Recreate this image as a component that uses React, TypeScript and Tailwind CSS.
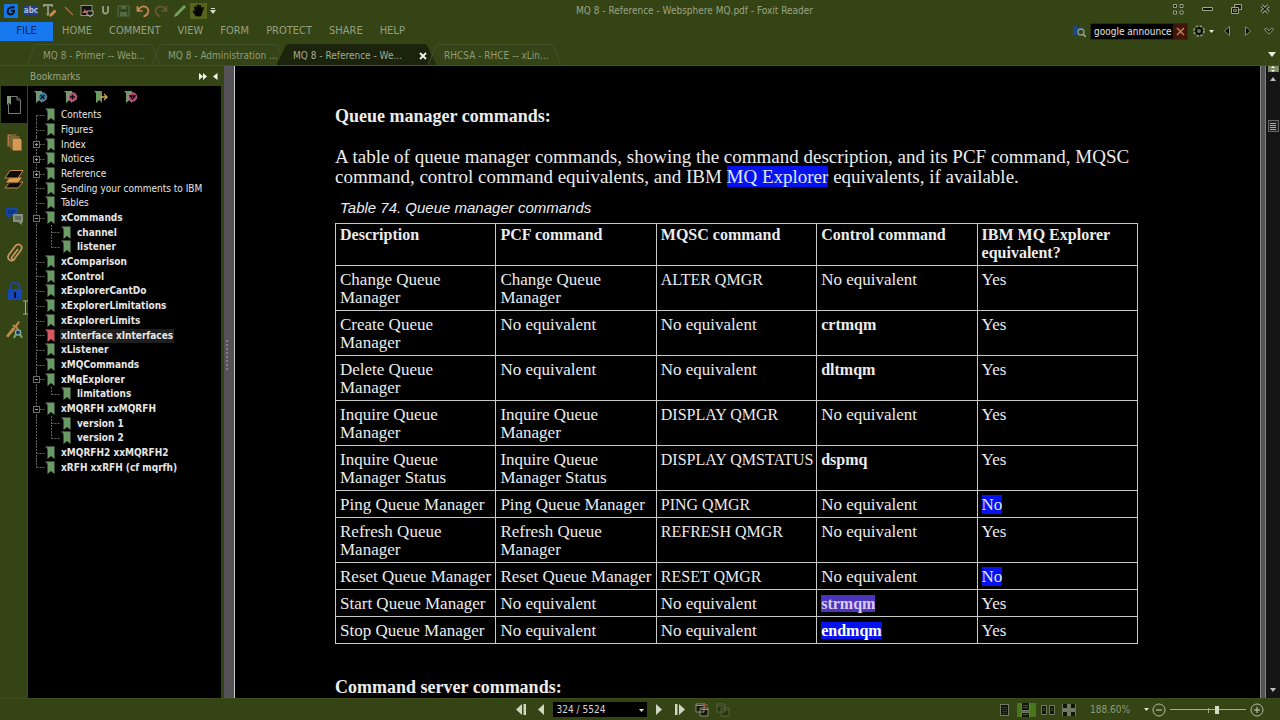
import React from "react";

type Kids = { children?: React.ReactNode };

const uiFont = "font-['DejaVu_Sans_Condensed','DejaVu_Sans',sans-serif]";

function IconButton({ label, className = "", children }: Kids & { label: string; className?: string }) {
  return (
    <button type="button" aria-label={label} title={label} className={`flex shrink-0 items-center justify-center ${className}`}>
      {children}
    </button>
  );
}

/* ---------- title bar ---------- */

function TitleBar() {
  return (
    <header className="flex h-[21px] shrink-0 items-center">
      <div className="flex w-[217px] shrink-0 items-center pl-1">
        <IconButton label="Foxit Reader" className="w-[14px]">
          <svg width="14" height="14" viewBox="0 0 14 14">
            <rect width="14" height="14" rx="1" fill="#1477e8" />
            <path d="M10.500 3.500C6.500 2.600 3.600 4.500 3.600 7.400c0 2.300 1.800 3.400 3.600 3 2-.5 2.800-2 2.800-3.600H7" fill="none" stroke="#0a1420" strokeWidth="2" />
          </svg>
        </IconButton>
        <IconButton label="Highlight text" className="ml-[5px] w-4">
          <span className="bg-[#23408c] text-[8px] leading-[9px] font-bold text-[#aebdcc]">abc</span>
        </IconButton>
        <IconButton label="Typewriter" className="ml-1 w-[14px]">
          <svg width="14" height="15" viewBox="0 0 14 15">
            <path d="M1 4V2h8v2M5 2v9M3.500 11.500h3" fill="none" stroke="#8f997e" strokeWidth="1.800" />
            <path d="m6.500 14 .5-3 4.500-4.500 2 2L9 13z" fill="#c98a50" />
          </svg>
        </IconButton>
        <IconButton label="Line" className="ml-[5px] w-[14px]">
          <svg width="12" height="12" viewBox="0 0 12 12">
            <path d="m2 2 8 8" stroke="#a57045" strokeWidth="1.300" />
          </svg>
        </IconButton>
        <IconButton label="Snapshot" className="ml-1 w-[14px]">
          <svg width="14" height="14" viewBox="0 0 14 14">
            <rect x="1" y="1.500" width="11" height="10" fill="#121410" stroke="#94917e" />
            <path d="m2 9 3-4 3 4H2z" fill="#b0605a" />
            <path d="M7 7h6v4h-2l-1 2-1-2H7z" fill="#14170f" stroke="#b8aaa5" />
          </svg>
        </IconButton>
        <IconButton label="Underline" className="ml-1 w-[14px]">
          <svg width="9" height="11" viewBox="0 0 9 11">
            <path d="M2 1v5c0 3.500 5 3.500 5 0V1" fill="none" stroke="#98a387" strokeWidth="1.700" />
          </svg>
        </IconButton>
        <IconButton label="Save" className="ml-[5px] w-[13px]">
          <svg width="13" height="12" viewBox="0 0 13 12">
            <path d="M1 1h11v10H1z" fill="none" stroke="#49603b" strokeWidth="1.500" />
            <path d="M4 1h5v3H4zM3 7h7v4H3z" fill="#526b45" />
          </svg>
        </IconButton>
        <IconButton label="Undo" className="ml-[6px] w-[14px]">
          <svg width="14" height="14" viewBox="0 0 14 14">
            <path d="M1.500 2v5h5M2 6.500C4 2.500 7.500 1.500 10 3c4 2.500 2.500 8.500-2.500 9.500" fill="none" stroke="#cd8653" strokeWidth="1.700" />
          </svg>
        </IconButton>
        <IconButton label="Redo" className="ml-1 w-[14px]">
          <svg width="14" height="14" viewBox="0 0 14 14">
            <path d="M12.500 2v5h-5M12 6.500C10 2.500 6.500 1.500 4 3 0 5.500 1.500 11.500 6.500 12.500" fill="none" stroke="#69592e" strokeWidth="1.700" />
          </svg>
        </IconButton>
        <IconButton label="Pencil" className="ml-[5px] w-[14px]">
          <svg width="14" height="14" viewBox="0 0 14 14">
            <path d="m1 13 1-3L11 1l2 2-9 9z" fill="#74a35d" />
          </svg>
        </IconButton>
        <IconButton label="Hand" className="ml-[3px] h-4 w-[17px] bg-[#56651b]">
          <svg width="13" height="13" viewBox="0 0 13 13">
            <path d="M4 12 1 7.500l1-.8 1.500 1.200L2.500 3l1.200-.4 1.500 3V1h1.400v4.500L7.700 1.300l1.200.4-.4 4L10.600 3l1 .7-1.700 5L8.800 12z" fill="#050605" stroke="#050605" strokeWidth=".8" />
          </svg>
        </IconButton>
        <IconButton label="Customize toolbar" className="ml-[2px] w-2">
          <svg width="6" height="6" viewBox="0 0 6 6">
            <path d="M1 0h4v1H1zM0 2h6L3 6z" fill="#d6dcc6" />
          </svg>
        </IconButton>
      </div>
      <h1 className="flex-1 text-center text-[10px] text-[#99a386]">MQ 8 - Reference - Websphere MQ.pdf - Foxit Reader</h1>
      <div className="flex items-center gap-[17px] pr-[9px] pb-1">
        <IconButton label="Touch mode" className="w-3">
          <svg width="12" height="12" viewBox="0 0 12 12">
            <path d="M1.500 1.500h3v3h-3zM8 1.500h3v3H8zM1.500 8h3v3h-3zM8 8h3v3H8z" fill="#14190a" stroke="#9ba588" />
          </svg>
        </IconButton>
        <IconButton label="Minimize" className="w-3">
          <svg width="11" height="4" viewBox="0 0 11 4"><path d="M.5.5h10v3H.5z" fill="#12170a" stroke="#9ba588" /></svg>
        </IconButton>
        <IconButton label="Restore" className="w-3">
          <svg width="11" height="10" viewBox="0 0 11 10">
            <path d="M3.500.5h7v5h-3M3.500 3V.5M.5 3.500h7v6h-7z" fill="#14190a" stroke="#9ba588" />
            <path d="M2.500 5.500h3v2h-3z" fill="#354415" stroke="#9ba588" strokeWidth=".7" />
          </svg>
        </IconButton>
        <IconButton label="Close" className="w-3">
          <svg width="10" height="10" viewBox="0 0 10 10">
            <path d="m1.500 1.500 7 7m0-7-7 7" stroke="#a3ad91" strokeWidth="3.200" />
            <path d="m1.500 1.500 7 7m0-7-7 7" stroke="#12170a" strokeWidth="1.400" />
          </svg>
        </IconButton>
      </div>
    </header>
  );
}

/* ---------- menu row ---------- */

const menus = ["HOME", "COMMENT", "VIEW", "FORM", "PROTECT", "SHARE", "HELP"];

function MenuRow() {
  return (
    <div className="flex h-5 shrink-0 items-center justify-between">
      <nav className="flex h-full items-center gap-[17px] text-[11px] text-[#95a083]">
        <a href="#file" className="mr-[-8px] flex h-[19px] w-[53px] items-center justify-center bg-[#1778f0] text-[#0c2850]">FILE</a>
        {menus.map((m) => (
          <a key={m} href={`#${m.toLowerCase()}`}>{m}</a>
        ))}
      </nav>
      <div className="flex h-full items-center pr-[6px]">
        <IconButton label="Find in files" className="w-[14px]">
          <svg width="14" height="14" viewBox="0 0 14 14">
            <path d="M1 2h4l1 2h5v7H1z" fill="#1d4a86" />
            <circle cx="9" cy="8" r="3" fill="#33431a" stroke="#8f9f83" strokeWidth="1.300" />
            <path d="m11 10 3 3" stroke="#9faf90" strokeWidth="1.500" />
          </svg>
        </IconButton>
        <div className="ml-1 flex h-[17px] w-[98px] border border-[#27310f] bg-black">
          <input aria-label="Find" defaultValue="google announced" className="ml-[3px] w-[78px] min-w-0 bg-transparent text-[10px] text-[#e4e4e4] outline-none" />
          <IconButton label="Clear search" className="ml-px w-[14px] bg-[#40150a]">
            <svg width="9" height="9" viewBox="0 0 9 9"><path d="m1 1 7 7m0-7L1 8" stroke="#d0835e" strokeWidth="1.400" /></svg>
          </IconButton>
        </div>
        <IconButton label="Search settings" className="ml-[5px] w-3">
          <svg width="12" height="12" viewBox="0 0 12 12">
            <circle cx="6" cy="6" r="4.800" fill="none" stroke="#8d9878" strokeWidth="2.200" strokeDasharray="2.200 1.600" />
            <circle cx="6" cy="6" r="3" fill="#6c7950" stroke="#0a0d05" strokeWidth="2" />
          </svg>
        </IconButton>
        <IconButton label="Search options" className="ml-[3px] w-[6px]">
          <svg width="5" height="3" viewBox="0 0 5 3"><path d="M0 0h5L2.500 3z" fill="#e6eadb" /></svg>
        </IconButton>
        <IconButton label="Find previous" className="ml-2 w-[9px]">
          <svg width="8" height="12" viewBox="0 0 8 12"><path d="M6.500 1.500v9L1.500 6z" fill="#080a04" stroke="#84906b" /></svg>
        </IconButton>
        <IconButton label="Find next" className="ml-3 w-[9px]">
          <svg width="8" height="12" viewBox="0 0 8 12"><path d="M1.500 1.500v9l5-4.500z" fill="#080a04" stroke="#84906b" /></svg>
        </IconButton>
        <IconButton label="Collapse ribbon" className="ml-3 w-[10px]">
          <svg width="10" height="8" viewBox="0 0 10 8">
            <path d="M1 1.500 5 5.500l4-4" fill="none" stroke="#98a383" strokeWidth="3" />
            <path d="M1.500 2 5 5.500 8.500 2" fill="none" stroke="#141a09" strokeWidth="1.300" />
          </svg>
        </IconButton>
      </div>
    </div>
  );
}

/* ---------- document tabs ---------- */

const tabs = [
  { title: "MQ 8 - Primer -- Web...", active: false },
  { title: "MQ 8 - Administration ...", active: false },
  { title: "MQ 8 - Reference - We...", active: true },
  { title: "RHCSA - RHCE -- xLin...", active: false },
];

function TabRow() {
  return (
    <div className="flex h-[25px] shrink-0 items-end justify-between border-b border-[#43521f] pl-[27px]">
      <div role="tablist" className="flex h-[21px]">
        {tabs.map((t) => (
          <button
            key={t.title}
            type="button"
            role="tab"
            aria-selected={t.active}
            className={`relative mr-[-8px] flex items-center pl-4 text-[10px] whitespace-nowrap ${t.active ? "w-[159px] text-[#a3ab93]" : "w-[133px] text-[#8f9b79]"}`}
          >
            <svg className="absolute inset-0 h-full w-full" viewBox="0 0 133 21" preserveAspectRatio="none">
              <path d="M0 21 8 1.500Q9 .5 10 .5h113q1 0 2 1L133 21" fill={t.active ? "#1b230c" : "#34441a"} fillOpacity={t.active ? 1 : 0.3} stroke={t.active ? "#1b230c" : "#42522a"} />
            </svg>
            <span className="relative pt-[2px]">{t.title}</span>
            {t.active && (
              <svg className="relative mt-[2px] mr-[9px] ml-auto" width="8" height="8" viewBox="0 0 8 8" aria-label="Close tab">
                <path d="m1 1 6 6m0-6L1 7" stroke="#f2f4ec" strokeWidth="1.800" />
              </svg>
            )}
          </button>
        ))}
      </div>
      <IconButton label="Tab list" className="mr-1 mb-2 w-2">
        <svg width="8" height="5" viewBox="0 0 8 5"><path d="M0 0h8L4 5z" fill="#e6eadb" /></svg>
      </IconButton>
    </div>
  );
}

/* ---------- navigation panel ---------- */

function SideStrip() {
  return (
    <div className="flex w-7 shrink-0 flex-col border-r border-[#3d4a2a]">
      <IconButton label="Bookmarks" className="ml-px h-[37px] bg-black">
        <svg width="16" height="20" viewBox="0 0 16 20">
          <path d="M5 1.500h6L14.500 5v13.500h-12V9" fill="none" stroke="#777a77" />
          <path d="M11 1.500V5h3.500" fill="none" stroke="#777a77" />
          <path d="M1 1h4v9L3 8l-2 2z" fill="#81987d" />
        </svg>
      </IconButton>
      <IconButton label="Page thumbnails" className="h-[38px] pl-[2px]">
        <svg width="17" height="19" viewBox="0 0 17 19">
          <path d="M1 1h10v13H1z" fill="#b47a46" stroke="#354415" />
          <path d="M4 3h10v13H4z" fill="#c5864d" stroke="#354415" />
          <path d="M6 5h8l2 2v11H6z" fill="#d99855" stroke="#354415" />
        </svg>
      </IconButton>
      <IconButton label="Layers" className="h-9">
        <svg width="20" height="20" viewBox="0 0 20 20">
          <path d="M6 13h13l-5 6H1z" fill="#0b0d06" stroke="#c58c52" />
          <path d="M6 8h13l-5 6H1z" fill="#e39c50" stroke="#382c18" />
          <path d="M6 1.500h13L14 9H1z" fill="#0b0d06" stroke="#c58c52" />
        </svg>
      </IconButton>
      <IconButton label="Comments" className="h-[37px] pl-[2px]">
        <svg width="19" height="18" viewBox="0 0 19 18">
          <path d="M1 1h12v8H6l-3 3V9H1z" fill="#1845a4" />
          <path d="M3 4h8M3 6h6" stroke="#0b2866" />
          <path d="M8 7h10v8h-1v3l-4-3H8z" fill="#859083" />
          <path d="M10 10h6M10 12h6" stroke="#3e4937" />
        </svg>
      </IconButton>
      <IconButton label="Attachments" className="h-[38px] pl-[2px]">
        <svg width="16" height="20" viewBox="0 0 16 20">
          <path d="m11 6-6 8c-1.500 2 1 3.500 2.500 1.700l6-8C17 3 11.500-1 8 3.400l-6 8C-1 16 4 20 8 16" fill="none" stroke="#c69760" strokeWidth="1.700" />
        </svg>
      </IconButton>
      <IconButton label="Security" className="h-[38px] pl-[2px]">
        <svg width="16" height="20" viewBox="0 0 16 20">
          <path d="M3.500 9V6a4.500 4.500 0 0 1 9 0v3" fill="none" stroke="#1848a8" strokeWidth="2" />
          <path d="M1 8h14v11H1z" fill="#1547b8" />
          <path d="M7 11h2v6H7z" fill="#06102a" />
        </svg>
      </IconButton>
      <IconButton label="Digital signatures" className="h-[38px] pl-[2px]">
        <svg width="17" height="19" viewBox="0 0 17 19">
          <path d="m0 16 7-9 2.500 2L2 17.500z" fill="#c4894f" />
          <path d="m8 7 4.500-6 1.500 1-4 6z" fill="#c4894f" />
          <path d="m7 5 5 4" stroke="#c4894f" strokeWidth="2" />
          <path d="m10 14-2 4M14 14l2 4" stroke="#6fa46a" strokeWidth="2" />
          <circle cx="12" cy="12.500" r="2.600" fill="#173c72" stroke="#8ab4a2" strokeWidth="1.300" />
        </svg>
      </IconButton>
    </div>
  );
}

function Ribbon({ red }: { red?: boolean }) {
  return (
    <svg className="relative shrink-0" width="10" height="14" viewBox="0 0 10 14">
      <path d="M2 .5h7.500V13L6 10l-3.500 3V3z" fill={red ? "#d7585f" : "#6b9a67"} />
      <path d="M0 .5h3V4z" fill={red ? "#b84e50" : "#577c54"} />
    </svg>
  );
}

type Node = { label: string; bold?: boolean; box?: "+" | "-"; child?: "mid" | "last"; red?: boolean };

const nodes: Node[] = [
  { label: "Contents" },
  { label: "Figures" },
  { label: "Index", box: "+" },
  { label: "Notices", box: "+" },
  { label: "Reference", box: "+" },
  { label: "Sending your comments to IBM" },
  { label: "Tables" },
  { label: "xCommands", bold: true, box: "-" },
  { label: "channel", bold: true, child: "mid" },
  { label: "listener", bold: true, child: "last" },
  { label: "xComparison", bold: true },
  { label: "xControl", bold: true },
  { label: "xExplorerCantDo", bold: true },
  { label: "xExplorerLimitations", bold: true },
  { label: "xExplorerLimits", bold: true },
  { label: "xInterface xInterfaces", bold: true, red: true },
  { label: "xListener", bold: true },
  { label: "xMQCommands", bold: true },
  { label: "xMqExplorer", bold: true, box: "-" },
  { label: "limitations", bold: true, child: "last" },
  { label: "xMQRFH xxMQRFH", bold: true, box: "-" },
  { label: "version 1", bold: true, child: "mid" },
  { label: "version 2", bold: true, child: "last" },
  { label: "xMQRFH2 xxMQRFH2", bold: true },
  { label: "xRFH xxRFH (cf mqrfh)", bold: true },
];

function Branch({ node, first, last }: { node: Node; first: boolean; last: boolean }) {
  const dots = { stroke: "#62625c", strokeDasharray: "2 1" };
  return (
    <svg className={`h-full shrink-0 ${node.child ? "w-[29px]" : "w-[13px]"}`}>
      <line x1="4.5" x2="4.5" y1={first ? "50%" : "0"} y2={last ? "50%" : "100%"} {...dots} />
      {node.child ? (
        <>
          <line x1="19.5" x2="19.5" y1="0" y2={node.child === "last" ? "50%" : "100%"} {...dots} />
          <line x1="19.5" x2="28" y1="7.5" y2="7.5" {...dots} />
        </>
      ) : (
        <line x1="4.5" x2="13" y1="7.5" y2="7.5" {...dots} />
      )}
      {node.box && (
        <>
          <rect x="1.500" y="4.500" width="6" height="6" fill="#000" stroke="#6c6c66" />
          <path d={node.box === "+" ? "M3 7.500h3M4.500 6v3" : "M3 7.500h3"} stroke="#a0a098" />
        </>
      )}
    </svg>
  );
}

const bookmarkTools = [
  { label: "Delete bookmark", fill: "#2086a5", mark: "m7 5 4 4m0-4L7 9" },
  { label: "New bookmark", fill: "#b64a6c", mark: "M9 4.500v5M6.500 7h5" },
  { label: "Go to bookmark", fill: "none", mark: "M6 7h7M10 4l3 3-3 3" },
  { label: "Bookmark options", fill: "#b6406c", mark: "M6.500 6h5L9 9z" },
];

function BookmarkPanel() {
  return (
    <aside className="flex w-[224px] shrink-0 flex-col">
      <div className="flex h-5 shrink-0 items-center pl-[30px] text-[10px] text-[#9aa587]">
        <h2>Bookmarks</h2>
        <IconButton label="Expand panel" className="ml-auto">
          <svg width="8" height="7" viewBox="0 0 8 7"><path d="m0 0 4 3.500L0 7zM4 0l4 3.500L4 7z" fill="#f3f5ec" /></svg>
        </IconButton>
        <IconButton label="Hide panel" className="mr-[6px] ml-[6px]">
          <svg width="5" height="7" viewBox="0 0 5 7"><path d="M4.500 0v7L0 3.500z" fill="#f3f5ec" /></svg>
        </IconButton>
      </div>
      <div className="flex min-h-0 flex-1">
        <SideStrip />
        <div className="mr-[3px] min-w-0 flex-1 bg-black">
          <div className="flex h-[22px] items-center gap-4 pb-px pl-[6px]">
            {bookmarkTools.map((b) => (
              <IconButton key={b.label} label={b.label} className="w-[14px]">
                <svg width="14" height="14" viewBox="0 0 14 14">
                  <path d="M0 1h8v12L5.500 10 2 13V3z" fill="#6b9a67" />
                  {b.fill !== "none" && <circle cx="8.500" cy="7" r="4.300" fill={b.fill} stroke="#d0a0a6" strokeWidth=".6" />}
                  <path d={b.mark} transform={b.fill === "none" ? undefined : "translate(-.5 0)"} fill="none" stroke={b.fill === "none" ? "#d0a852" : "#150b16"} strokeWidth="1.300" />
                </svg>
              </IconButton>
            ))}
          </div>
          <ul className="grid h-[367px] auto-rows-fr pl-1 text-[10px] leading-[14px] whitespace-nowrap text-[#e6e6e6]">
            {nodes.map((n, i) => (
              <li key={n.label} className="flex min-h-0 items-center">
                <Branch node={n} first={i === 0} last={i === nodes.length - 1} />
                <Ribbon red={n.red} />
                <a href="#bookmark" className={`ml-[5px] px-px ${n.bold ? "font-bold" : ""} ${n.red ? "bg-[#1f1f1f]" : ""}`}>{n.label}</a>
              </li>
            ))}
          </ul>
        </div>
      </div>
    </aside>
  );
}

/* ---------- document page ---------- */

const headers = ["Description", "PCF command", "MQSC command", "Control command", "IBM MQ Explorer equivalent?"];

const rows: string[][] = [
  ["Change Queue\nManager", "Change Queue\nManager", "ALTER QMGR", "No equivalent", "Yes"],
  ["Create Queue\nManager", "No equivalent", "No equivalent", "crtmqm", "Yes"],
  ["Delete Queue\nManager", "No equivalent", "No equivalent", "dltmqm", "Yes"],
  ["Inquire Queue\nManager", "Inquire Queue\nManager", "DISPLAY QMGR", "No equivalent", "Yes"],
  ["Inquire Queue\nManager Status", "Inquire Queue\nManager Status", "DISPLAY QMSTATUS", "dspmq", "Yes"],
  ["Ping Queue Manager", "Ping Queue Manager", "PING QMGR", "No equivalent", "No"],
  ["Refresh Queue\nManager", "Refresh Queue\nManager", "REFRESH QMGR", "No equivalent", "Yes"],
  ["Reset Queue Manager", "Reset Queue Manager", "RESET QMGR", "No equivalent", "No"],
  ["Start Queue Manager", "No equivalent", "No equivalent", "strmqm", "Yes"],
  ["Stop Queue Manager", "No equivalent", "No equivalent", "endmqm", "Yes"],
];

function Cell({ text }: { text: string }) {
  if (text === "strmqm") return <mark className="bg-[#4a35bd] text-[16px] font-bold text-[#dccbee]">{text}</mark>;
  if (text === "endmqm") return <mark className="bg-[#0512ee] text-[16px] font-bold text-white">{text}</mark>;
  if (text === "No") return <mark className="bg-[#0512ee] text-[#dfe6ff]">{text}</mark>;
  if (/^(crtmqm|dltmqm|dspmq)$/.test(text)) return <b className="text-[16px]">{text}</b>;
  if (text === text.toUpperCase()) return <span className="text-[16px]">{text}</span>;
  return <>{text}</>;
}

function DocumentPage() {
  return (
    <main className="min-w-0 flex-1 overflow-hidden bg-black pt-10 pr-[122px] pl-[100px] font-['Palatino_Linotype','Liberation_Serif',serif] text-[#ececec]">
      <h2 className="text-[18px] leading-5 font-bold">Queue manager commands:</h2>
      <p className="mt-[21px] text-[19px] leading-5 whitespace-nowrap">
        A table of queue manager commands, showing the command description, and its PCF command, MQSC
        <br />
        command, control command equivalents, and IBM <mark className="bg-[#0512ee] text-[#dfe6ff]">MQ Explorer</mark> equivalents, if available.
      </p>
      <table className="mt-3 w-full table-fixed border-collapse text-[17px] leading-[18px]">
        <caption className="pb-[6px] pl-[5px] text-left font-['Liberation_Sans',sans-serif] text-[15px] leading-[18px] italic">Table 74. Queue manager commands</caption>
        <thead>
          <tr>
            {headers.map((h) => (
              <th key={h} scope="col" className="border border-[#c9c9c9] px-1 pt-[2px] pb-[3px] text-left align-top text-[16px] font-bold">{h}</th>
            ))}
          </tr>
        </thead>
        <tbody>
          {rows.map((r) => (
            <tr key={r[0]}>
              {r.map((c, i) => (
                <td key={i} className="border border-[#c9c9c9] px-1 pt-[5px] pb-[3px] align-top leading-[18px] whitespace-pre">
                  <Cell text={c} />
                </td>
              ))}
            </tr>
          ))}
        </tbody>
      </table>
      <h2 className="mt-[33px] text-[18px] leading-5 font-bold">Command server commands:</h2>
    </main>
  );
}

function ScrollBar() {
  return (
    <div className="flex w-5 shrink-0">
      <div className="w-[6px] border-x border-[#858585] bg-[#555257]" />
      <div className="flex flex-1 flex-col items-center bg-[#141414]">
        <IconButton label="Split view" className="h-[6px] w-[11px] bg-[#7f8c63]">
          <svg width="6" height="6" viewBox="0 0 6 6"><path d="M3 0 5 2H1zM0 3h6M3 6 1 4h4z" fill="#fff" /></svg>
        </IconButton>
        <IconButton label="Scroll up" className="mt-[2px] h-[9px]">
          <svg width="6" height="4" viewBox="0 0 6 4"><path d="M0 4h6L3 0z" fill="#bdbdbd" /></svg>
        </IconButton>
        <div className="mt-[37px] flex h-3 w-[11px] flex-col items-center justify-center gap-px border border-[#666] bg-[#222]">
          <span className="h-px w-[6px] bg-[#aaa]" />
          <span className="h-px w-[6px] bg-[#aaa]" />
          <span className="h-px w-[6px] bg-[#aaa]" />
          <span className="h-px w-[6px] bg-[#aaa]" />
        </div>
        <IconButton label="Scroll down" className="mt-auto mb-1 h-[9px]">
          <svg width="6" height="4" viewBox="0 0 6 4"><path d="M0 0h6L3 4z" fill="#bdbdbd" /></svg>
        </IconButton>
      </div>
    </div>
  );
}

/* ---------- status bar ---------- */

function PageIcon({ kind }: { kind: "single" | "continuous" | "facing" | "facingContinuous" }) {
  const shape = { fill: "#11150a", stroke: "#717b63" };
  return (
    <svg width="14" height="14" viewBox="0 0 14 14">
      {kind === "single" && (
        <>
          <rect x="2.500" y="1.500" width="8" height="11" {...shape} />
          <path d="M4 4.500h5M4 6.500h5M4 8.500h5M4 10.500h5" stroke="#353d2a" />
        </>
      )}
      {kind === "continuous" && (
        <>
          <path d="M2.500 0v7.500h8V0M2.500 14V9.500h8V14" {...shape} />
          <path d="M4 2.500h5M4 4.500h5M4 11.500h5" stroke="#4a543c" />
        </>
      )}
      {kind === "facing" && (
        <>
          <path d="M.5 2.500h5v9h-5zM8.500 2.500h5v9h-5z" {...shape} />
          <path d="M2 5.500h2M2 7.500h2M10 5.500h2M10 7.500h2" stroke="#4a543c" />
        </>
      )}
      {kind === "facingContinuous" && (
        <>
          <path d="M.5 1v4.500h5V1M8.500 1v4.500h5V1M.5 13V8.500h5V13M8.500 13V8.500h5V13" {...shape} />
          <path d="M0 7h14M7 1v12" stroke="#717b63" strokeWidth="2" />
        </>
      )}
    </svg>
  );
}

function StatusBar() {
  const arrow = { fill: "#ccd6c3" };
  return (
    <footer className="flex h-[22px] shrink-0 items-center border-t border-[#3d4c1b] text-[10px]">
      <div className="flex w-[57%] shrink-0 items-center justify-end">
        <IconButton label="First page" className="w-3">
          <svg width="11" height="11" viewBox="0 0 11 11"><path d="M6 0v11L0 5.500zM10 0v11H7.500V0z" {...arrow} /></svg>
        </IconButton>
        <IconButton label="Previous page" className="ml-[10px] w-2">
          <svg width="7" height="11" viewBox="0 0 7 11"><path d="M6 0v11L0 5.500z" {...arrow} /></svg>
        </IconButton>
        <div className="relative ml-[7px] h-[15px] w-[94px]">
          <select aria-label="Page" className="h-[15px] w-full appearance-none bg-black pl-1 text-[10px] leading-[15px] text-[#d9d9d9]">
            <option>324 / 5524</option>
          </select>
          <svg className="pointer-events-none absolute top-[7px] right-[3px]" width="5" height="3" viewBox="0 0 5 3"><path d="M0 0h5L2.500 3z" fill="#e0e0e0" /></svg>
        </div>
        <IconButton label="Next page" className="ml-2 w-2">
          <svg width="7" height="11" viewBox="0 0 7 11"><path d="M1 0v11l6-5.500z" {...arrow} /></svg>
        </IconButton>
        <IconButton label="Last page" className="ml-[11px] w-3">
          <svg width="11" height="11" viewBox="0 0 11 11"><path d="M5 0v11l6-5.500zM1 0v11h2.500V0z" {...arrow} /></svg>
        </IconButton>
        <IconButton label="Previous view" className="ml-[9px] w-[14px]">
          <svg width="14" height="14" viewBox="0 0 14 14">
            <path d="M1 1h8v8H1zM5 5h8v8H5z" fill="#15180d" stroke="#8c8873" />
            <path d="M1 2.500h8M6 6.500h7" stroke="#a08c75" />
            <path d="M13 2H8m2-2L8 2l2 2" fill="none" stroke="#b05b46" />
          </svg>
        </IconButton>
        <IconButton label="Next view" className="ml-[7px] w-[14px]">
          <svg width="14" height="14" viewBox="0 0 14 14">
            <path d="M1 1h8v8H1zM5 5h8v8H5zM1 3h8M6 7h7" fill="#29340f" stroke="#56623a" />
          </svg>
        </IconButton>
      </div>
      <div className="flex flex-1 items-center justify-end pr-4">
        <IconButton label="Single page" className="mr-[3px] w-[18px]"><PageIcon kind="single" /></IconButton>
        <IconButton label="Continuous" className="mr-[3px] h-[14px] w-[19px] bg-[#49761d]"><PageIcon kind="continuous" /></IconButton>
        <IconButton label="Facing" className="mr-[3px] w-[18px]"><PageIcon kind="facing" /></IconButton>
        <IconButton label="Continuous facing" className="w-[18px]"><PageIcon kind="facingContinuous" /></IconButton>
        <button type="button" className="ml-3 flex items-center gap-[14px] text-[#8f9b77]">
          188.60%
          <svg width="5" height="3" viewBox="0 0 5 3"><path d="M0 0h5L2.500 3z" fill="#dce2cd" /></svg>
        </button>
        <IconButton label="Zoom out" className="ml-[3px] w-[14px]">
          <svg width="14" height="14" viewBox="0 0 14 14"><circle cx="7" cy="7" r="6" fill="none" stroke="#b3bea0" /><path d="M4 7h6" stroke="#cbd4bb" /></svg>
        </IconButton>
        <div className="relative mx-1 flex h-3 w-[76px] items-center">
          <span className="absolute top-[4px] left-[38px] h-[5px] w-px bg-[#9daa85]" />
          <input
            type="range"
            aria-label="Zoom"
            defaultValue={63}
            className="h-px w-full appearance-none bg-[#a5b08f] [&::-webkit-slider-thumb]:h-2 [&::-webkit-slider-thumb]:w-1 [&::-webkit-slider-thumb]:appearance-none [&::-webkit-slider-thumb]:bg-[#d4dcc8]"
          />
        </div>
        <IconButton label="Zoom in" className="w-[14px]">
          <svg width="14" height="14" viewBox="0 0 14 14"><circle cx="7" cy="7" r="6" fill="none" stroke="#b3bea0" /><path d="M4 7h6M7 4v6" stroke="#cbd4bb" /></svg>
        </IconButton>
      </div>
    </footer>
  );
}

export default function App() {
  return (
    <div className={`relative flex h-screen flex-col overflow-hidden bg-[#354415] ${uiFont}`}>
      <TitleBar />
      <MenuRow />
      <TabRow />
      <div className="flex min-h-0 flex-1">
        <BookmarkPanel />
        <div className="flex w-[11px] shrink-0 items-center border-r border-[#c8c8c8] bg-[#555257] pb-[54px] pl-[2px]">
          <span className="h-[30px] border-l-2 border-dotted border-[#858288]" />
        </div>
        <DocumentPage />
        <ScrollBar />
      </div>
      <StatusBar />
      <svg className="pointer-events-none absolute top-[300px] left-[22px]" width="7" height="15" viewBox="0 0 7 15">
        <path d="M1 1h5M1 14h5M3.500 1v13" stroke="#a7ad9c" />
      </svg>
    </div>
  );
}
